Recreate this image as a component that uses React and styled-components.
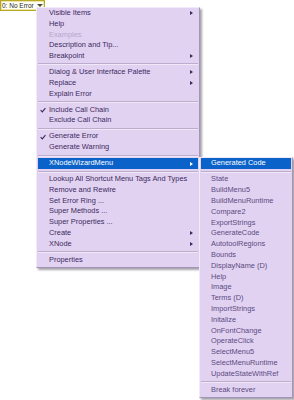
import React from "react";
import styled, { createGlobalStyle } from "styled-components";

const GlobalStyle = createGlobalStyle`
  html, body { margin: 0; padding: 0; background: #ffffff; }
  body { font-family: "Liberation Sans", Arial, sans-serif; }
`;

const Page = styled.div`
  position: relative;
  width: 294px;
  height: 400px;
  overflow: hidden;
  background: #ffffff;
`;

const Trigger = styled.div`
  display: flex;
  align-items: flex-start;
  justify-content: space-between;
  box-sizing: border-box;
  width: 45px;
  height: 11px;
  padding: 0 1px 0 1px;
  border: 1px solid #b8a826;
  box-shadow: inset 0 0 0 0.5px #d8cc60;
  background: #fffff4;
  color: #2a2a2a;
  font-size: 6.5px;
  line-height: 9px;
  white-space: nowrap;
`;

const DownCaret = styled.span`
  width: 0;
  height: 0;
  margin-top: 3px;
  border-left: 3px solid transparent;
  border-right: 3px solid transparent;
  border-top: 3.5px solid #4a4a4a;
`;

const Menu = styled.div`
  position: absolute;
  left: ${(p) => p.$left};
  top: ${(p) => p.$top};
  width: ${(p) => p.$width}px;
  box-sizing: border-box;
  padding: 0 1px 1px 1px;
  background: #e2d2f2;
  border: 1px solid;
  border-color: #f2eafa #a494b6 #a494b6 #f2eafa;
  box-shadow: 2px 2px 2px rgba(60, 50, 70, 0.45);
  font-size: 7.4px;
  z-index: ${(p) => p.$z || 1};
`;

const Item = styled.div`
  position: relative;
  display: flex;
  align-items: center;
  height: ${(p) => p.$h}px;
  line-height: ${(p) => p.$h}px;
  padding-left: ${(p) => p.$indent}px;
  padding-right: 5px;
  white-space: nowrap;
  color: ${(p) =>
    p.$active ? "#ffffff" : p.$disabled ? "#b5a6c8" : p.$tone};
  background: ${(p) => (p.$active ? "#0b63c9" : "transparent")};
`;

const Label = styled.span`
  flex: 1;
`;

const Check = styled.svg`
  position: absolute;
  left: 2px;
  top: 50%;
  margin-top: -3px;
  width: 6px;
  height: 6px;
`;

const SubArrow = styled.span`
  width: 0;
  height: 0;
  border-top: 2.5px solid transparent;
  border-bottom: 2.5px solid transparent;
  border-left: 3px solid ${(p) => (p.$active ? "#ffffff" : "#3a2a5c")};
`;

const Separator = styled.div`
  height: ${(p) => p.$h}px;
  display: flex;
  align-items: center;
  &::before {
    content: "";
    display: block;
    width: 100%;
    height: 0;
    border-top: 1px solid #bcadcc;
    border-bottom: 1px solid #f0e8f8;
  }
`;

const mainItems = [
  { t: "Visible Items", sub: true },
  { t: "Help" },
  { t: "Examples", disabled: true },
  { t: "Description and Tip..." },
  { t: "Breakpoint", sub: true },
  "-",
  { t: "Dialog & User Interface Palette", sub: true },
  { t: "Replace", sub: true },
  { t: "Explain Error" },
  "-",
  { t: "Include Call Chain", checked: true },
  { t: "Exclude Call Chain" },
  "-",
  { t: "Generate Error", checked: true },
  { t: "Generate Warning" },
  "-",
  { t: "XNodeWizardMenu", sub: true, active: true },
  "-",
  { t: "Lookup All Shortcut Menu Tags And Types" },
  { t: "Remove and Rewire" },
  { t: "Set Error Ring ..." },
  { t: "Super Methods ..." },
  { t: "Super Properties ..." },
  { t: "Create", sub: true },
  { t: "XNode", sub: true },
  "-",
  { t: "Properties" },
];

const subItems = [
  { t: "Generated Code", active: true },
  "-",
  { t: "State" },
  { t: "BuildMenu5" },
  { t: "BuildMenuRuntime" },
  { t: "Compare2" },
  { t: "ExportStrings" },
  { t: "GenerateCode" },
  { t: "AutotoolRegions" },
  { t: "Bounds" },
  { t: "DisplayName (D)" },
  { t: "Help" },
  { t: "Image" },
  { t: "Terms (D)" },
  { t: "ImportStrings" },
  { t: "Initalize" },
  { t: "OnFontChange" },
  { t: "OperateClick" },
  { t: "SelectMenu5" },
  { t: "SelectMenuRuntime" },
  { t: "UpdateStateWithRef" },
  "-",
  { t: "Break forever" },
];

function SubMenu() {
  return (
    <Menu $left="calc(100% + 1px)" $top="-1px" $width={94} $z={2}>
      {subItems.map((it, i) =>
        it === "-" ? (
          <Separator key={i} $h={5.4} />
        ) : (
          <Item key={i} $h={10.8} $indent={10} $tone="#5a4a7e" $active={it.active}>
            <Label>{it.t}</Label>
          </Item>
        )
      )}
    </Menu>
  );
}

export default function App() {
  return (
    <Page>
      <GlobalStyle />
      <Trigger>
        <span>0: No Error</span>
        <DownCaret />
      </Trigger>
      <Menu $left="36px" $top="7px" $width={164}>
        {mainItems.map((it, i) =>
          it === "-" ? (
            <Separator key={i} $h={5.3} />
          ) : (
            <Item
              key={i}
              $h={10.75}
              $indent={11}
              $tone="#3a2a5c"
              $active={it.active}
              $disabled={it.disabled}
            >
              {it.checked && (
                <Check viewBox="0 0 6 6">
                  <path d="M0.6 3.2 L2.3 4.9 L5.4 1.1" fill="none" stroke="#3a2a5c" strokeWidth="1.1" />
                </Check>
              )}
              <Label>{it.t}</Label>
              {it.sub && <SubArrow $active={it.active} />}
              {it.active && <SubMenu />}
            </Item>
          )
        )}
      </Menu>
    </Page>
  );
}
